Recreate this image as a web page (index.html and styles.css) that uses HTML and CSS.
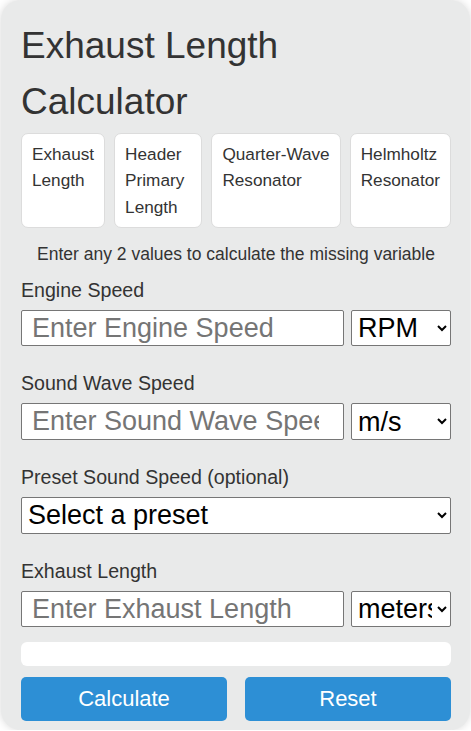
FILE: index.html
```html
<!DOCTYPE html>
<html lang="en">
<head>
<meta charset="utf-8">
<title>Exhaust Length Calculator</title>
<link rel="stylesheet" href="styles.css">
</head>
<body>
<div class="calc">
  <h1 class="title">Exhaust Length Calculator</h1>
  <div class="tabs">
    <div class="tab">Exhaust Length</div>
    <div class="tab">Header Primary Length</div>
    <div class="tab"><span class="nowrap">Quarter-Wave</span> Resonator</div>
    <div class="tab">Helmholtz Resonator</div>
  </div>
  <p class="hint">Enter any 2 values to calculate the missing variable</p>

  <div class="field">
    <label class="label" for="rpm">Engine Speed</label>
    <div class="row">
      <input class="input" id="rpm" type="number" placeholder="Enter Engine Speed">
      <select class="unit"><option>RPM</option></select>
    </div>
  </div>

  <div class="field">
    <label class="label" for="sws">Sound Wave Speed</label>
    <div class="row">
      <input class="input" id="sws" type="number" placeholder="Enter Sound Wave Speed">
      <select class="unit"><option>m/s</option></select>
    </div>
  </div>

  <div class="field">
    <label class="label" for="preset">Preset Sound Speed (optional)</label>
    <select class="preset" id="preset"><option>Select a preset</option></select>
  </div>

  <div class="field last">
    <label class="label" for="len">Exhaust Length</label>
    <div class="row">
      <input class="input" id="len" type="number" placeholder="Enter Exhaust Length">
      <select class="unit"><option>meters</option></select>
    </div>
  </div>

  <div class="result"></div>

  <div class="buttons">
    <button class="btn" type="button">Calculate</button>
    <button class="btn" type="button">Reset</button>
  </div>
</div>
</body>
</html>
```

FILE: styles.css
```css
html, body {
  margin: 0;
  padding: 0;
  background: #ffffff;
}

body {
  font-family: "Liberation Sans", Arial, sans-serif;
  color: #333333;
}

.calc {
  margin: 0 1px;
  padding: 18px 19px 9px 20px;
  background: #e9eaea;
  border-radius: 20px;
  box-shadow: 0 0 8px rgba(0, 0, 0, 0.15);
}

.title {
  margin: 0 0 4px;
  font-size: 37px;
  line-height: 55.5px;
  font-weight: normal;
  color: #333333;
}

.tabs {
  display: flex;
  gap: 9px;
}

.tab {
  background: #ffffff;
  border: 1px solid #dcdcdc;
  border-radius: 7px;
  padding: 7px 10px;
  font-size: 17.2px;
  line-height: 26.3px;
  color: #333333;
}

.nowrap {
  white-space: nowrap;
}

.hint {
  margin: 13px 0 12px;
  font-size: 17.5px;
  line-height: 26px;
  text-align: center;
  color: #333333;
}

.field {
  margin-bottom: 26px;
}

.field.last {
  margin-bottom: 14.5px;
}

.label {
  display: block;
  margin-bottom: 9px;
  font-size: 19.6px;
  line-height: 22px;
  color: #333333;
}

.row {
  display: flex;
  gap: 7px;
}

.input {
  flex: 1;
  min-width: 0;
  box-sizing: border-box;
  height: 36.5px;
  margin: 0;
  padding: 0 9px 0 10px;
  border: 1px solid #767676;
  border-radius: 2px;
  background: #ffffff;
  font-family: "Liberation Sans", Arial, sans-serif;
  font-size: 27px;
  color: #000000;
}

.input::placeholder {
  color: #757575;
}

.unit,
.preset {
  box-sizing: border-box;
  margin: 0;
  padding: 0 2px;
  border: 1px solid #767676;
  border-radius: 2px;
  background: #ffffff;
  font-family: "Liberation Sans", Arial, sans-serif;
  font-size: 27px;
  color: #000000;
}

.unit {
  width: 100px;
  height: 36.5px;
}

.preset {
  display: block;
  width: 100%;
  height: 37px;
}

.result {
  height: 24.5px;
  background: #ffffff;
  border-radius: 6px;
}

.buttons {
  display: grid;
  grid-template-columns: 1fr 1fr;
  gap: 18px;
  margin-top: 10.5px;
}

.btn {
  height: 43.7px;
  border: none;
  border-radius: 5px;
  background: #2d8fd5;
  color: #ffffff;
  font-family: "Liberation Sans", Arial, sans-serif;
  font-size: 22px;
  padding: 0;
}
```
